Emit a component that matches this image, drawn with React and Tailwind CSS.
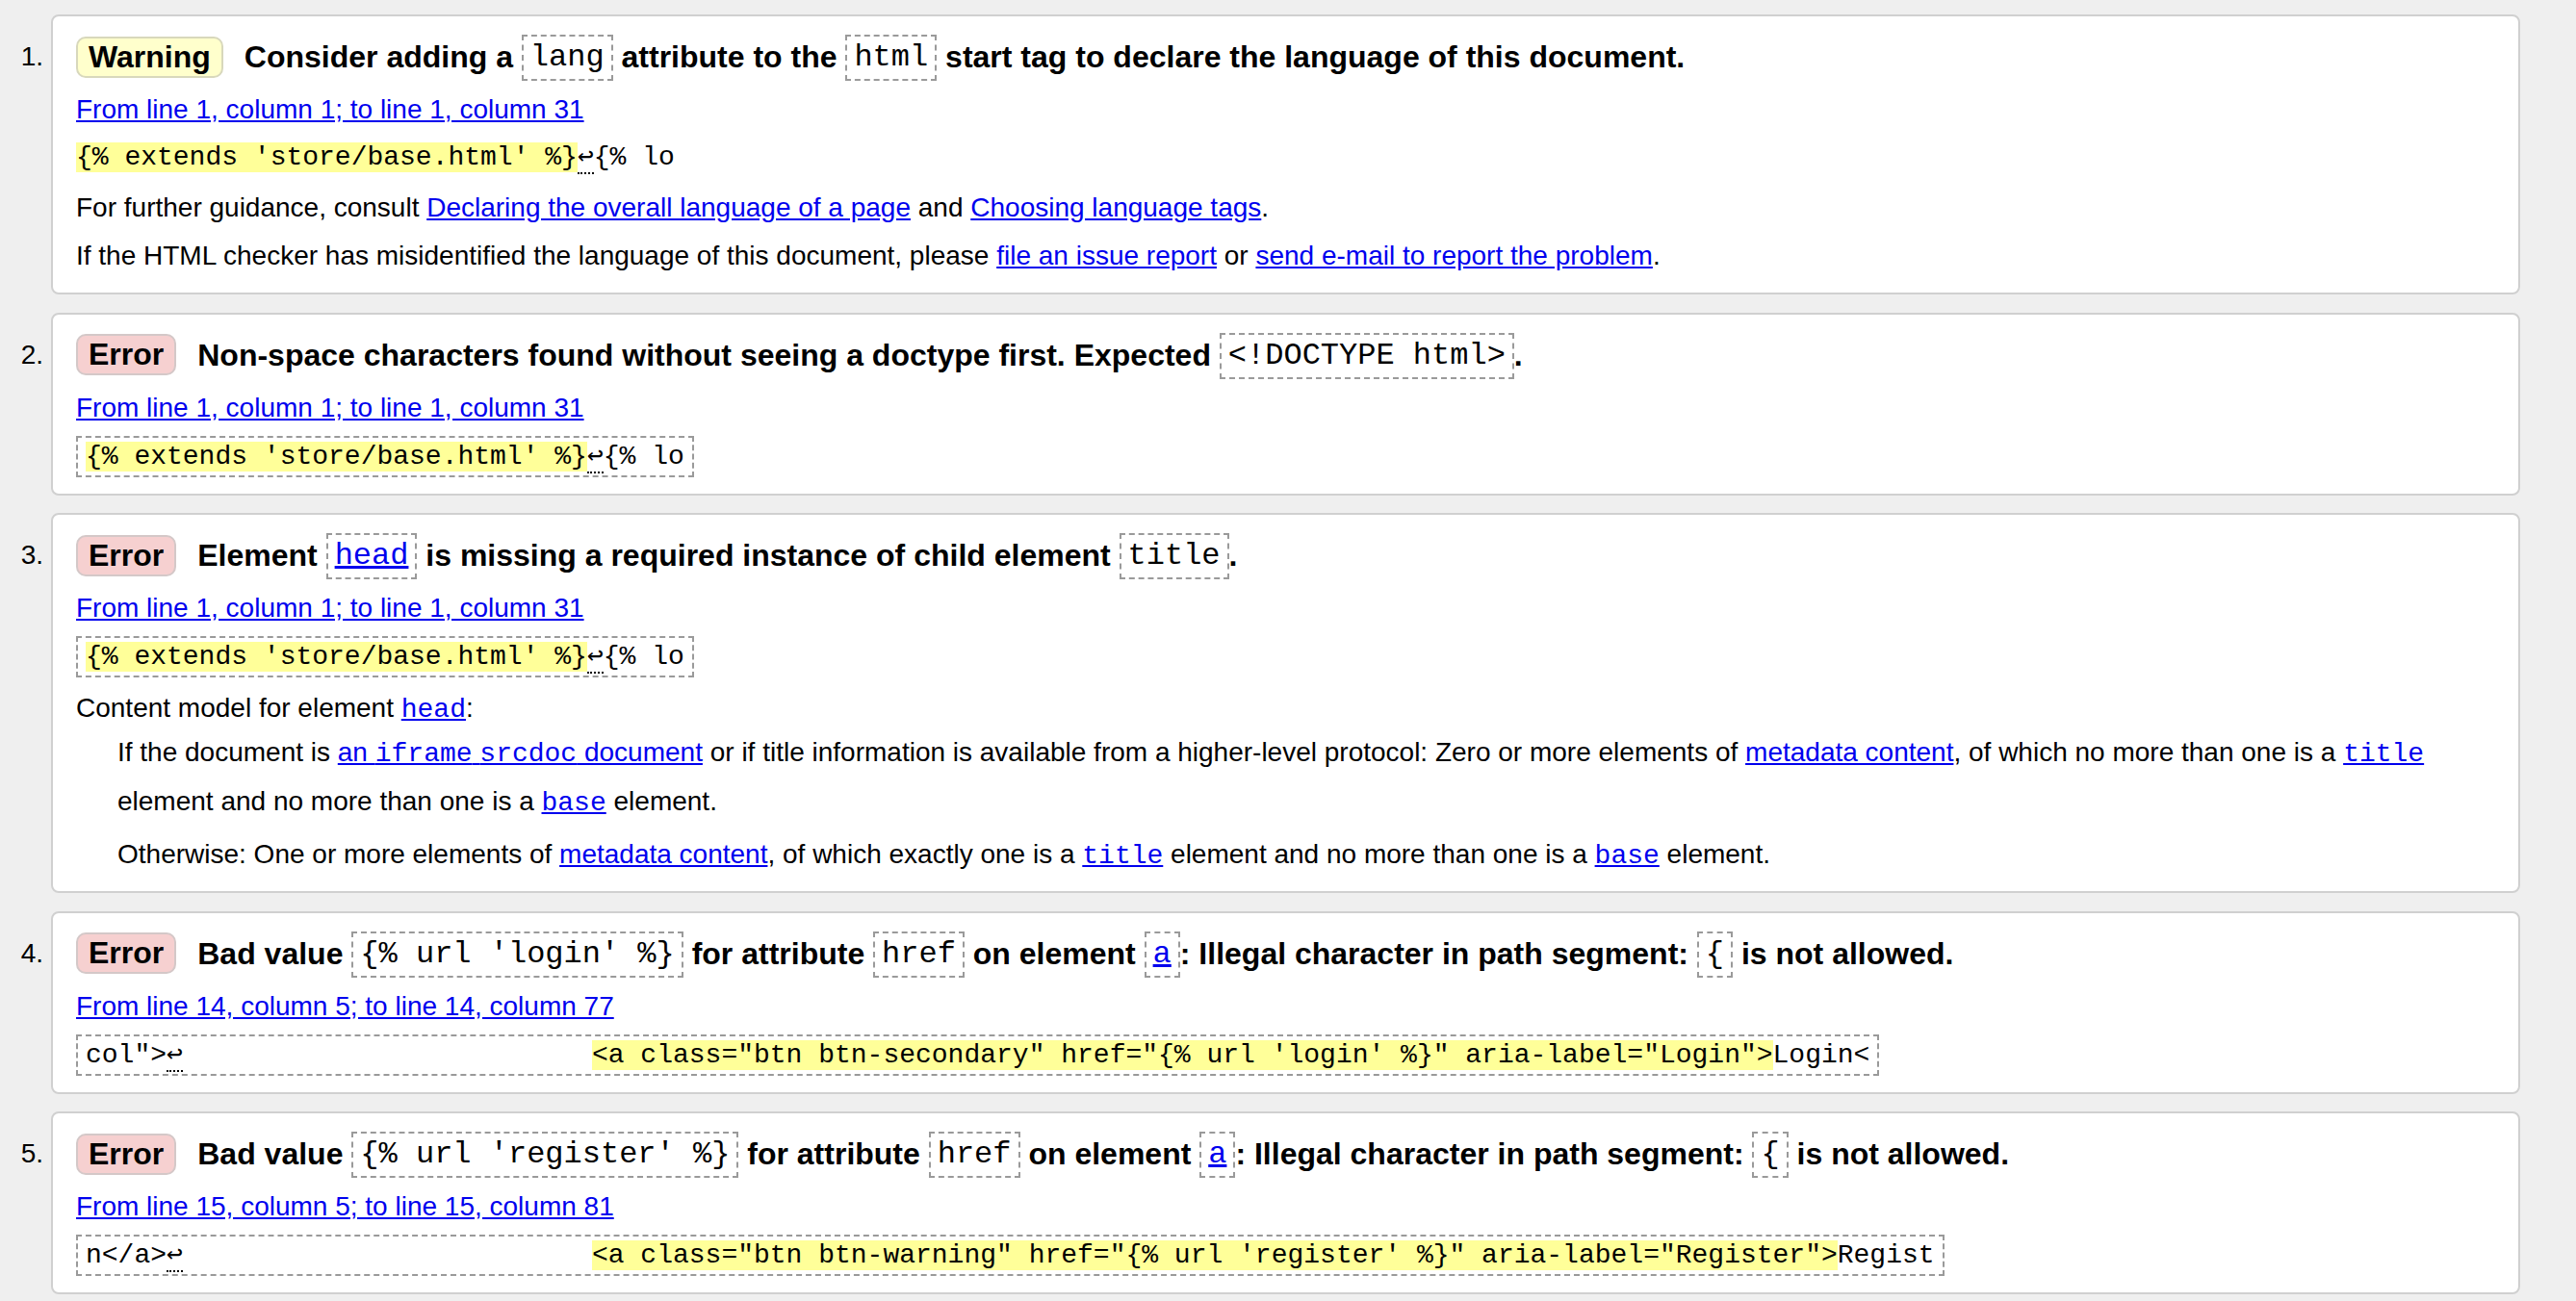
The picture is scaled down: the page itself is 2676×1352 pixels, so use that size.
const SANS = "font-['Liberation_Sans',Arial,sans-serif]"
const MONO = "font-['Liberation_Mono','DejaVu_Sans_Mono',monospace]"
const LINK = "text-[#0000ee] underline"
// mono pieces inside running text, kept from growing the line box
const INLINE_MONO = "font-['Liberation_Mono','DejaVu_Sans_Mono',monospace] leading-[28px]"

function Badge({ kind, children }) {
  const tone =
    kind === "warning"
      ? "bg-[#ffffcc] border-[#d8d8bc]"
      : "bg-[#f6d0d0] border-[#d4c8c8]"
  return (
    <span className={`inline-block shrink-0 rounded-[10px] border-2 px-[11px] text-[32px] font-bold leading-[39px] ${tone}`}>
      {children}
    </span>
  )
}

// dashed inline code inside a message heading
function HCode({ link, children }) {
  return (
    <code className={`${MONO} inline-block align-[2px] border-2 border-dashed border-[#9a9a9a] px-[7px] text-[32px] font-normal leading-[44px]`}>
      {link ? <a className={LINK}>{children}</a> : children}
    </code>
  )
}

function Ret() {
  return <span className="border-b-2 border-dotted border-black">↩</span>
}

function Mark({ children }) {
  return <mark className="bg-[#ffff99] text-black">{children}</mark>
}

function Heading({ kind, label, children }) {
  return (
    <div className="mb-[4px] flex h-[52px] items-center">
      <Badge kind={kind}>{label}</Badge>
      <p className="ml-[22px] whitespace-nowrap text-[32px] font-bold leading-[52px]">{children}</p>
    </div>
  )
}

function Location({ children }) {
  return (
    <p className="h-[50px] text-[28px] leading-[50px]">
      <a className={LINK}>{children}</a>
    </p>
  )
}

function Extract({ children }) {
  return (
    <div className={`${MONO} mt-[4px] w-fit whitespace-pre border-2 border-dashed border-[#9a9a9a] px-[8px] pt-[4px] pb-[3px] text-[28px] leading-[32px]`}>
      {children}
    </div>
  )
}

function Item({ n, pad, children }) {
  return (
    <li className="flex">
      <div className="w-[53px] shrink-0 pt-[18px] pr-[8px] text-right text-[28px] leading-[52px]">{n}.</div>
      <div className={`flex-1 rounded-[8px] border-2 border-[#d0d0d0] bg-white pt-[16px] pl-[24px] ${pad}`}>
        {children}
      </div>
    </li>
  )
}

const SPACES = "                         "

export default function App() {
  return (
    <div className={`${SANS} min-h-screen bg-[#efefef] pt-[15px] pr-[58px] pb-[8px] text-black`}>
      <ol className="flex flex-col gap-[18.5px]">
        <Item n={1} pad="pb-[13px]">
          <Heading kind="warning" label="Warning">
            Consider adding a <HCode>lang</HCode> attribute to the <HCode>html</HCode> start tag to declare the language of this document.
          </Heading>
          <Location>From line 1, column 1; to line 1, column 31</Location>
          <div className={`${MONO} h-[50px] whitespace-pre text-[28px] leading-[50px]`}>
            <Mark>{"{% extends 'store/base.html' %}"}</Mark>
            <Ret />
            {"{% lo"}
          </div>
          <p className="mt-[2px] h-[50px] text-[28px] leading-[50px]">
            For further guidance, consult <a className={LINK}>Declaring the overall language of a page</a> and{" "}
            <a className={LINK}>Choosing language tags</a>.
          </p>
          <p className="h-[50px] text-[28px] leading-[50px]">
            If the HTML checker has misidentified the language of this document, please{" "}
            <a className={LINK}>file an issue report</a> or <a className={LINK}>send e-mail to report the problem</a>.
          </p>
        </Item>

        <Item n={2} pad="pb-[17px]">
          <Heading kind="error" label="Error">
            Non-space characters found without seeing a doctype first. Expected <HCode>{"<!DOCTYPE html>"}</HCode>.
          </Heading>
          <Location>From line 1, column 1; to line 1, column 31</Location>
          <Extract>
            <Mark>{"{% extends 'store/base.html' %}"}</Mark>
            <Ret />
            {"{% lo"}
          </Extract>
        </Item>

        <Item n={3} pad="pb-[13px]">
          <Heading kind="error" label="Error">
            Element <HCode link>head</HCode> is missing a required instance of child element <HCode>title</HCode>.
          </Heading>
          <Location>From line 1, column 1; to line 1, column 31</Location>
          <Extract>
            <Mark>{"{% extends 'store/base.html' %}"}</Mark>
            <Ret />
            {"{% lo"}
          </Extract>
          <p className="mt-[12px] h-[40px] text-[28px] leading-[40px]">
            Content model for element <a className={`${LINK} ${INLINE_MONO}`}>head</a>:
          </p>
          <div className="pl-[43px] text-[28px]">
            <p className="whitespace-nowrap leading-[51px]">
              If the document is{" "}
              <a className={LINK}>
                an <code className={INLINE_MONO}>iframe</code> <code className={INLINE_MONO}>srcdoc</code> document
              </a>{" "}
              or if title information is available from a higher-level protocol: Zero or more elements of{" "}
              <a className={LINK}>metadata content</a>, of which no more than one is a{" "}
              <a className={`${LINK} ${INLINE_MONO}`}>title</a>
              <br />
              element and no more than one is a <a className={`${LINK} ${INLINE_MONO}`}>base</a> element.
            </p>
            <p className="mt-[4px] whitespace-nowrap leading-[51px]">
              Otherwise: One or more elements of <a className={LINK}>metadata content</a>, of which exactly one is a{" "}
              <a className={`${LINK} ${INLINE_MONO}`}>title</a> element and no more than one is a{" "}
              <a className={`${LINK} ${INLINE_MONO}`}>base</a> element.
            </p>
          </div>
        </Item>

        <Item n={4} pad="pb-[17px]">
          <Heading kind="error" label="Error">
            Bad value <HCode>{"{% url 'login' %}"}</HCode> for attribute <HCode>href</HCode> on element{" "}
            <HCode link>a</HCode>: Illegal character in path segment: <HCode>{"{"}</HCode> is not allowed.
          </Heading>
          <Location>From line 14, column 5; to line 14, column 77</Location>
          <Extract>
            {'col">'}
            <Ret />
            {SPACES}
            <span className="ml-[5px]">
              <Mark>{`<a class="btn btn-secondary" href="{% url 'login' %}" aria-label="Login">`}</Mark>
            </span>
            {"Login<"}
          </Extract>
        </Item>

        <Item n={5} pad="pb-[17px]">
          <Heading kind="error" label="Error">
            Bad value <HCode>{"{% url 'register' %}"}</HCode> for attribute <HCode>href</HCode> on element{" "}
            <HCode link>a</HCode>: Illegal character in path segment: <HCode>{"{"}</HCode> is not allowed.
          </Heading>
          <Location>From line 15, column 5; to line 15, column 81</Location>
          <Extract>
            {"n</a>"}
            <Ret />
            {SPACES}
            <span className="ml-[5px]">
              <Mark>{`<a class="btn btn-warning" href="{% url 'register' %}" aria-label="Register">`}</Mark>
            </span>
            {"Regist"}
          </Extract>
        </Item>
      </ol>
    </div>
  )
}
